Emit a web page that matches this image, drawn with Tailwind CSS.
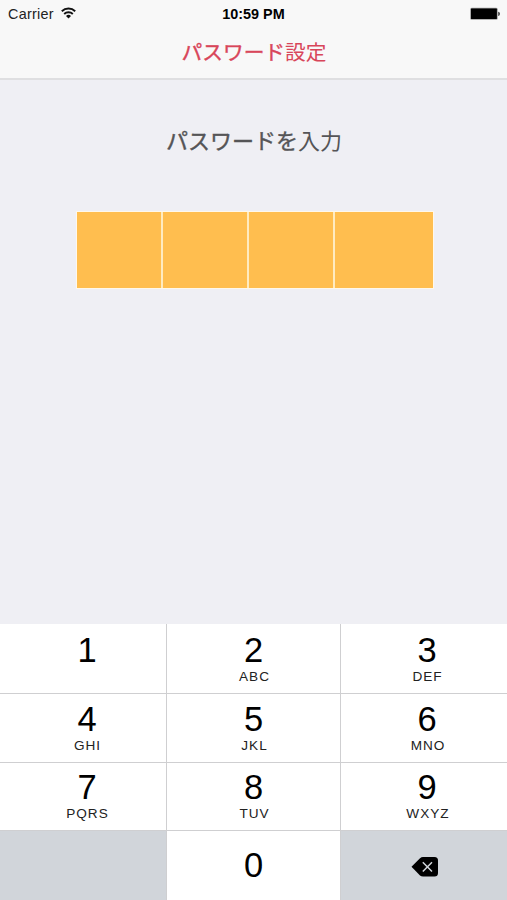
<!DOCTYPE html>
<html lang="ja">
<head>
<meta charset="utf-8">
<title>パスワード設定</title>
<script src="https://cdn.jsdelivr.net/npm/@tailwindcss/browser@4"></script>
</head>
<body class="w-[507px] h-[900px] overflow-hidden bg-[#efeff4] flex flex-col font-['Liberation_Sans','Noto_Sans_CJK_JP',sans-serif] text-black">
<header class="h-[80px] shrink-0 bg-[#f8f8f8] border-b-2 border-[#dfdfe1] flex flex-col">
  <div class="h-[28px] grid grid-cols-3 items-center pl-2 pr-[6px]">
    <div class="flex items-center gap-[7px]">
      <span class="text-[14.4px] leading-7 tracking-[0.25px] text-[#222]">Carrier</span>
      <svg class="w-[15px] h-[12px] -mt-[3px]" viewBox="0 0 15 12" fill="none" stroke="#111" stroke-width="1.9">
        <path d="M.8 4.2a9.7 9.7 0 0 1 13.4 0M3.2 7a6.2 6.2 0 0 1 8.6 0"/>
        <path d="M7.5 11.5 5 8.9a3.6 3.6 0 0 1 5 0z" fill="#111" stroke="none"/>
      </svg>
    </div>
    <span class="-ml-[2px] text-center text-[14.4px] leading-7 font-bold whitespace-nowrap">10:59 PM</span>
    <svg class="justify-self-end w-[31px] h-[13px] -mt-px" viewBox="0 0 31 13">
      <rect x=".2" y=".8" width="27.5" height="12" rx="1.5" fill="#999"/>
      <rect x="1" y="1.6" width="25.9" height="10.4" rx=".5"/>
      <path d="M28.3 4.7c2 .3 2 3.9 0 4.2z" fill="#222"/>
    </svg>
  </div>
  <h1 class="h-[48px] -mt-px pl-px text-center text-[20.7px] leading-[48px] text-[#d8465a] font-['Noto_Sans_CJK_JP',sans-serif]"><span class="[-webkit-text-stroke:0.4px_#d8465a]">パスワード</span>設定</h1>
</header>
<main class="h-[544px] shrink-0 flex flex-col items-center">
  <p class="mt-[39px] ml-px h-[40px] text-[22px] leading-[40px] text-[#555557] font-['Noto_Sans_CJK_JP',sans-serif]"><span class="[-webkit-text-stroke:0.4px_#555557]">パスワードを</span>入力</p>
  <div class="mt-[52px] ml-[3px] w-[358px] h-[78px] bg-[#ffebc0] border border-[#fff8ea] grid grid-cols-[84px_84px_84px_98px] gap-[2px]">
    <div class="bg-[#ffbe4f]"></div><div class="bg-[#ffbe4f]"></div><div class="bg-[#ffbe4f]"></div><div class="bg-[#ffbe4f]"></div>
  </div>
</main>
<section class="h-[276px] shrink-0 grid grid-cols-[166px_173px_166px] grid-rows-[69px_68px_67px_69px] gap-px bg-[#cfcfd1] text-center [&>button]:bg-white [&>button]:flex [&>button]:flex-col [&>button]:items-center [&_b]:font-normal [&_b]:text-[34.5px] [&_b]:leading-[40px] [&_small]:text-[13.6px] [&_small]:leading-4 [&_small]:tracking-[1px] [&_small]:text-[#222]">
  <button class="pl-[8px] pt-[6px]"><b>1</b></button>
  <button class="pt-[6px]"><b>2</b><small class="-mt-px pl-[2px]">ABC</small></button>
  <button class="pl-[6px] pt-[6px]"><b>3</b><small class="-mt-px pl-px">DEF</small></button>
  <button class="pl-[8px] pt-[5px]"><b>4</b><small class="-mt-px pl-px">GHI</small></button>
  <button class="pt-[5px]"><b>5</b><small class="-mt-px pl-[2px]">JKL</small></button>
  <button class="pl-[6px] pt-[5px]"><b>6</b><small class="-mt-px pl-[2px]">MNO</small></button>
  <button class="pl-[8px] pt-[4px]"><b>7</b><small class="-mt-px pl-px">PQRS</small></button>
  <button class="pt-[4px]"><b>8</b><small class="-mt-px pl-[2px]">TUV</small></button>
  <button class="pl-[6px] pt-[4px]"><b>9</b><small class="-mt-px pl-[2px]">WXYZ</small></button>
  <div class="bg-[#d1d5da]"></div>
  <button class="pt-[14px]"><b>0</b></button>
  <div class="bg-[#d1d5da] pl-[70px] pt-[25px]">
    <svg class="w-[28px] h-[22px]" viewBox="0 0 28 22"><path d="M.5 10.7 9 2.2Q10.3 1.1 12 1.1h11.5q3.5 0 3.5 3.5v12.5q0 3.5-3.5 3.5H12q-1.7 0-3-1.1z"/><path d="m11.8 6.3 9.2 9.2m0-9.2-9.2 9.2" stroke="#d1d5da" stroke-width="1.5"/></svg>
  </div>
</section>
</body>
</html>
